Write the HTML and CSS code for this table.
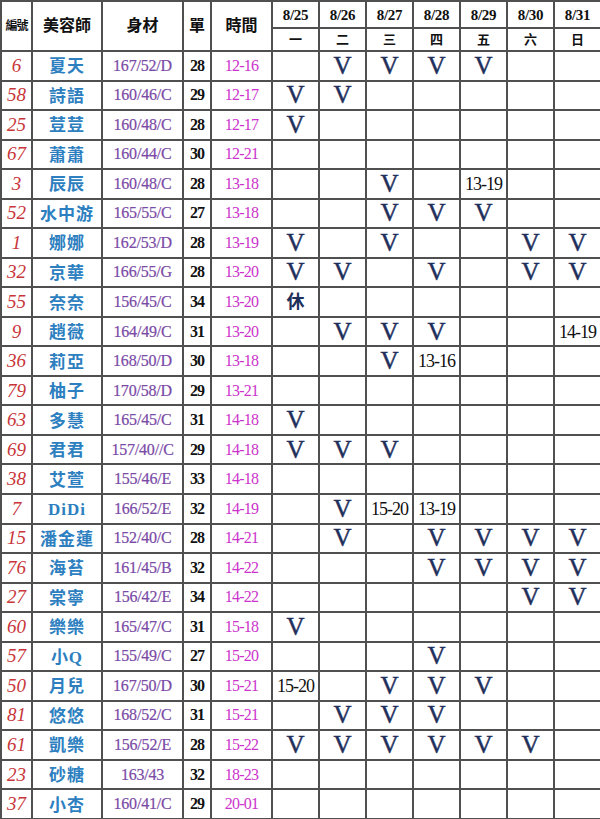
FILE: index.html
```html
<!DOCTYPE html>
<html lang="zh-Hant">
<head>
<meta charset="utf-8">
<title>美容師班表</title>
<link rel="stylesheet" href="styles.css">
</head>
<body>
<table class="sched">
<colgroup>
<col class="c-no"><col class="c-name"><col class="c-size"><col class="c-cnt"><col class="c-time">
<col class="c-day"><col class="c-day"><col class="c-day"><col class="c-day"><col class="c-day"><col class="c-day"><col class="c-day">
</colgroup>
<thead>
<tr class="h1">
<th rowspan="2" class="h-no">編號</th><th rowspan="2">美容師</th><th rowspan="2">身材</th><th rowspan="2">單</th><th rowspan="2">時間</th>
<th class="date">8/25</th><th class="date">8/26</th><th class="date">8/27</th><th class="date">8/28</th><th class="date">8/29</th><th class="date">8/30</th><th class="date">8/31</th>
</tr>
<tr class="h2">
<th class="wd">一</th><th class="wd">二</th><th class="wd">三</th><th class="wd">四</th><th class="wd">五</th><th class="wd">六</th><th class="wd">日</th>
</tr>
</thead>
<tbody>
<tr><td class="n">6</td><td class="nm">夏天</td><td class="sz">167/52/D</td><td class="ct">28</td><td class="tm">12-16</td><td></td><td class="v">V</td><td class="v">V</td><td class="v">V</td><td class="v">V</td><td></td><td></td></tr>
<tr><td class="n">58</td><td class="nm">詩語</td><td class="sz">160/46/C</td><td class="ct">29</td><td class="tm">12-17</td><td class="v">V</td><td class="v">V</td><td></td><td></td><td></td><td></td><td></td></tr>
<tr><td class="n">25</td><td class="nm">荳荳</td><td class="sz">160/48/C</td><td class="ct">28</td><td class="tm">12-17</td><td class="v">V</td><td></td><td></td><td></td><td></td><td></td><td></td></tr>
<tr><td class="n">67</td><td class="nm">蕭蕭</td><td class="sz">160/44/C</td><td class="ct">30</td><td class="tm">12-21</td><td></td><td></td><td></td><td></td><td></td><td></td><td></td></tr>
<tr><td class="n">3</td><td class="nm">辰辰</td><td class="sz">160/48/C</td><td class="ct">28</td><td class="tm">13-18</td><td></td><td></td><td class="v">V</td><td></td><td class="t">13-19</td><td></td><td></td></tr>
<tr><td class="n">52</td><td class="nm">水中游</td><td class="sz">165/55/C</td><td class="ct">27</td><td class="tm">13-18</td><td></td><td></td><td class="v">V</td><td class="v">V</td><td class="v">V</td><td></td><td></td></tr>
<tr><td class="n">1</td><td class="nm">娜娜</td><td class="sz">162/53/D</td><td class="ct">28</td><td class="tm">13-19</td><td class="v">V</td><td></td><td class="v">V</td><td></td><td></td><td class="v">V</td><td class="v">V</td></tr>
<tr><td class="n">32</td><td class="nm">京華</td><td class="sz">166/55/G</td><td class="ct">28</td><td class="tm">13-20</td><td class="v">V</td><td class="v">V</td><td></td><td class="v">V</td><td></td><td class="v">V</td><td class="v">V</td></tr>
<tr><td class="n">55</td><td class="nm">奈奈</td><td class="sz">156/45/C</td><td class="ct">34</td><td class="tm">13-20</td><td class="off">休</td><td></td><td></td><td></td><td></td><td></td><td></td></tr>
<tr><td class="n">9</td><td class="nm">趙薇</td><td class="sz">164/49/C</td><td class="ct">31</td><td class="tm">13-20</td><td></td><td class="v">V</td><td class="v">V</td><td class="v">V</td><td></td><td></td><td class="t">14-19</td></tr>
<tr><td class="n">36</td><td class="nm">莉亞</td><td class="sz">168/50/D</td><td class="ct">30</td><td class="tm">13-18</td><td></td><td></td><td class="v">V</td><td class="t">13-16</td><td></td><td></td><td></td></tr>
<tr><td class="n">79</td><td class="nm">柚子</td><td class="sz">170/58/D</td><td class="ct">29</td><td class="tm">13-21</td><td></td><td></td><td></td><td></td><td></td><td></td><td></td></tr>
<tr><td class="n">63</td><td class="nm">多慧</td><td class="sz">165/45/C</td><td class="ct">31</td><td class="tm">14-18</td><td class="v">V</td><td></td><td></td><td></td><td></td><td></td><td></td></tr>
<tr><td class="n">69</td><td class="nm">君君</td><td class="sz">157/40//C</td><td class="ct">29</td><td class="tm">14-18</td><td class="v">V</td><td class="v">V</td><td class="v">V</td><td></td><td></td><td></td><td></td></tr>
<tr><td class="n">38</td><td class="nm">艾萱</td><td class="sz">155/46/E</td><td class="ct">33</td><td class="tm">14-18</td><td></td><td></td><td></td><td></td><td></td><td></td><td></td></tr>
<tr><td class="n">7</td><td class="nm">DiDi</td><td class="sz">166/52/E</td><td class="ct">32</td><td class="tm">14-19</td><td></td><td class="v">V</td><td class="t">15-20</td><td class="t">13-19</td><td></td><td></td><td></td></tr>
<tr><td class="n">15</td><td class="nm">潘金蓮</td><td class="sz">152/40/C</td><td class="ct">28</td><td class="tm">14-21</td><td></td><td class="v">V</td><td></td><td class="v">V</td><td class="v">V</td><td class="v">V</td><td class="v">V</td></tr>
<tr><td class="n">76</td><td class="nm">海苔</td><td class="sz">161/45/B</td><td class="ct">32</td><td class="tm">14-22</td><td></td><td></td><td></td><td class="v">V</td><td class="v">V</td><td class="v">V</td><td class="v">V</td></tr>
<tr><td class="n">27</td><td class="nm">棠寧</td><td class="sz">156/42/E</td><td class="ct">34</td><td class="tm">14-22</td><td></td><td></td><td></td><td></td><td></td><td class="v">V</td><td class="v">V</td></tr>
<tr><td class="n">60</td><td class="nm">樂樂</td><td class="sz">165/47/C</td><td class="ct">31</td><td class="tm">15-18</td><td class="v">V</td><td></td><td></td><td></td><td></td><td></td><td></td></tr>
<tr><td class="n">57</td><td class="nm">小Q</td><td class="sz">155/49/C</td><td class="ct">27</td><td class="tm">15-20</td><td></td><td></td><td></td><td class="v">V</td><td></td><td></td><td></td></tr>
<tr><td class="n">50</td><td class="nm">月兒</td><td class="sz">167/50/D</td><td class="ct">30</td><td class="tm">15-21</td><td class="t">15-20</td><td></td><td class="v">V</td><td class="v">V</td><td class="v">V</td><td></td><td></td></tr>
<tr><td class="n">81</td><td class="nm">悠悠</td><td class="sz">168/52/C</td><td class="ct">31</td><td class="tm">15-21</td><td></td><td class="v">V</td><td class="v">V</td><td class="v">V</td><td></td><td></td><td></td></tr>
<tr><td class="n">61</td><td class="nm">凱樂</td><td class="sz">156/52/E</td><td class="ct">28</td><td class="tm">15-22</td><td class="v">V</td><td class="v">V</td><td class="v">V</td><td class="v">V</td><td class="v">V</td><td class="v">V</td><td></td></tr>
<tr><td class="n">23</td><td class="nm">砂糖</td><td class="sz">163/43</td><td class="ct">32</td><td class="tm">18-23</td><td></td><td></td><td></td><td></td><td></td><td></td><td></td></tr>
<tr><td class="n">37</td><td class="nm">小杏</td><td class="sz">160/41/C</td><td class="ct">29</td><td class="tm">20-01</td><td></td><td></td><td></td><td></td><td></td><td></td><td></td></tr>
</tbody>
</table>
</body>
</html>
```
FILE: styles.css
```css
html, body {
  margin: 0;
  padding: 0;
  background: #fff;
  overflow: hidden;
}

.sched {
  border-collapse: collapse;
  table-layout: fixed;
  width: 602px;
  font-family: "Liberation Serif", "Noto Sans CJK TC", serif;
  color: #111;
}

.c-no { width: 31px; }
.c-name { width: 70px; }
.c-size { width: 81px; }
.c-cnt { width: 28px; }
.c-time { width: 61px; }
.c-day { width: 47px; }

.sched th,
.sched td {
  border: 2px solid #505050;
  padding: 0;
  text-align: center;
  vertical-align: middle;
  overflow: hidden;
  white-space: nowrap;
  line-height: 20px;
}

.sched th {
  font-weight: bold;
  font-size: 16px;
  color: #111;
}

.h1 { height: 27px; }
.h2 { height: 23px; }

.sched .h-no { font-size: 12px; letter-spacing: -1px; }

.sched .date { font-size: 15px; letter-spacing: -0.3px; }
.sched .wd { font-size: 13px; }

.sched tbody tr { height: 29.54px; }

.n {
  font-style: italic;
  color: #c8353a;
  font-size: 19px;
}

.sched .nm {
  font-weight: bold;
  color: #2d7fbf;
  font-size: 17px;
  letter-spacing: 1px;
  padding-top: 3px;
}

.sz {
  color: #7a4aa6;
  font-size: 16px;
  letter-spacing: -0.2px;
  -webkit-text-stroke: 0.2px #7a4aa6;
}

.ct {
  color: #111;
  font-weight: bold;
  font-size: 16px;
  letter-spacing: -1px;
}

.tm {
  color: #cc33cc;
  font-size: 16px;
  letter-spacing: -0.8px;
}

.v {
  color: #1f2f5c;
  font-size: 25px;
  -webkit-text-stroke: 0.5px #1f2f5c;
}

.t {
  color: #111;
  font-size: 18px;
  letter-spacing: -1px;
}

.off {
  color: #1f2f5c;
  font-size: 18px;
  font-weight: bold;
}
```
